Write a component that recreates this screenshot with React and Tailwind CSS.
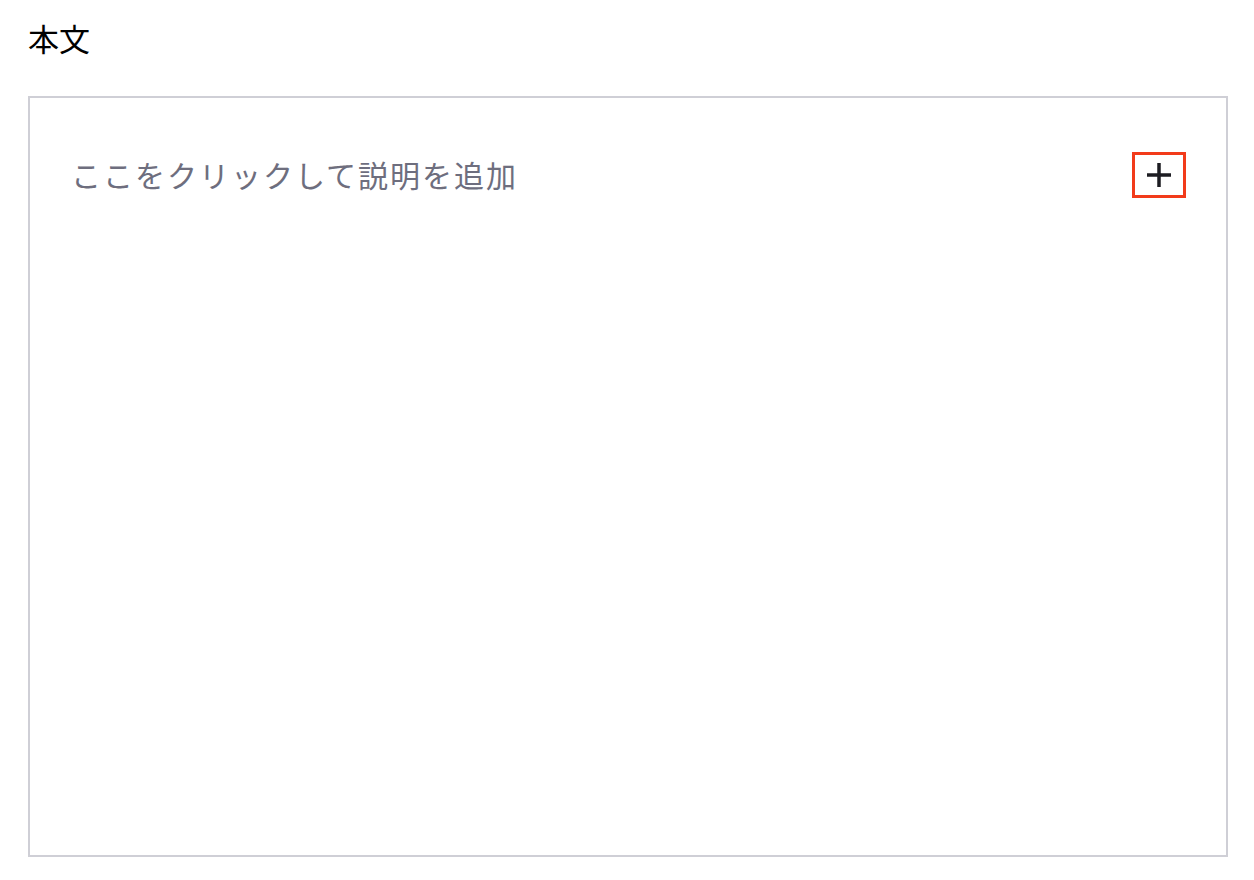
import React from 'react'

const PlusIcon = () => (
  <svg width="26" height="26" viewBox="0 0 26 26" fill="none">
    <path d="M13 1v24M1 13h24" stroke="#1c1c22" strokeWidth="3.5" />
  </svg>
)

const App = () => {
  return (
    <div className="min-h-[880px] bg-white px-[28px] pt-[18px]" style={{ fontFamily: '"Noto Sans CJK JP", "Noto Sans", sans-serif' }}>
      <h2 className="text-[31px] leading-[40px] text-black">本文</h2>
      <div className="mt-[38px] h-[761px] w-[1200px] border-2 border-[#cfcfd6] pl-[41px] pr-[40px] pt-[54px]">
        <div className="flex items-center justify-between">
          <p className="-mt-[3px] text-[30px] leading-[46px] text-[#6e6e7e] tracking-[2px]">
            ここをクリックして説明を追加
          </p>
          <button className="flex h-[46px] w-[54px] items-center justify-center border-[3px] border-[#f23b1a]">
            <PlusIcon />
          </button>
        </div>
      </div>
    </div>
  )
}

export default App
